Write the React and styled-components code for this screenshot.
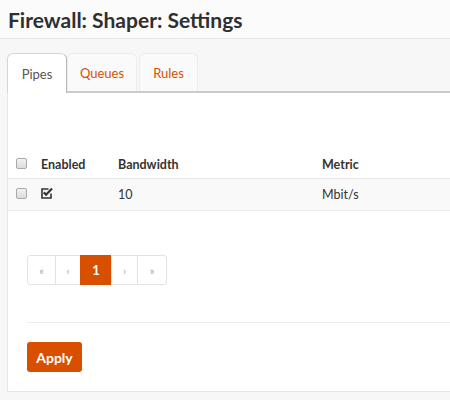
import React from 'react';
import styled, { createGlobalStyle } from 'styled-components';

const GlobalStyle = createGlobalStyle`
  body {
    margin: 0;
    background: #f7f7f7;
    font-family: Lato, "Liberation Sans", sans-serif;
    color: #333;
    overflow: hidden;
  }
`;

const ORANGE = '#d94f00';

const Header = styled.header`
  height: 38px;
  background: #fbfbfb;
  border-bottom: 1px solid #e6e6e6;
  display: flex;
  align-items: center;
  padding-left: 8px;
`;

const Title = styled.h1`
  margin: 0;
  font-size: 21px;
  font-weight: 700;
  color: #2f2f2f;
`;

const Main = styled.main`
  padding: 14px 0 0 7px;
`;

const TabBar = styled.ul`
  list-style: none;
  margin: 0;
  padding: 0;
  display: flex;
  height: 38px;
  border-bottom: 2px solid #cbcbcb;
`;

const Tab = styled.li`
  display: flex;
  align-items: center;
  justify-content: center;
  width: ${(p) => p.w}px;
  box-sizing: border-box;
  font-size: 13px;
  border-radius: 6px 6px 0 0;
  color: ${(p) => (p.active ? '#555' : ORANGE)};
  background: ${(p) => (p.active ? '#fff' : '#fafafa')};
  border: 1px solid ${(p) => (p.active ? '#d6d6d6' : '#ececec')};
  border-right-color: ${(p) => (p.active ? '#b8b8b8' : '#ececec')};
  border-bottom: none;
  margin-bottom: ${(p) => (p.active ? '-2px' : '0')};
  margin-right: ${(p) => (p.active ? '0' : '2px')};
`;

const Panel = styled.section`
  background: #fff;
  border: 1px solid #e6e6e6;
  border-top: none;
  border-right: none;
  padding-top: 57px;
`;

const Row = styled.div`
  display: grid;
  grid-template-columns: 33px 77px 204px 1fr;
  align-items: center;
  height: ${(p) => (p.head ? '28px' : '31px')};
  background: ${(p) => (p.head ? '#fff' : '#f9f9f9')};
  border-bottom: 1px solid ${(p) => (p.head ? '#e8e8e8' : '#ececec')};
  font-size: 12.5px;
  font-weight: ${(p) => (p.head ? 700 : 400)};
  color: #333;
`;

const Box = styled.span`
  display: block;
  width: 11px;
  height: 11px;
  margin-left: 8px;
  margin-top: -2px;
  border: 1px solid #a9a9a9;
  border-radius: 2px;
  background: linear-gradient(#f2f2f2, #dcdcdc);
  box-sizing: border-box;
`;

const Footer = styled.div`
  padding: 44px 0 19px 19px;
`;

const Pager = styled.div`
  display: flex;
`;

const PageBtn = styled.span`
  display: flex;
  align-items: center;
  justify-content: center;
  width: ${(p) => p.w}px;
  height: 30px;
  box-sizing: border-box;
  border: 1px solid ${(p) => (p.active ? ORANGE : '#e2e2e2')};
  margin-left: -1px;
  font-size: ${(p) => (p.active ? '13px' : '11px')};
  font-weight: ${(p) => (p.active ? 700 : 400)};
  color: ${(p) => (p.active ? '#fff' : '#aaa')};
  background: ${(p) => (p.active ? ORANGE : '#fff')};
  &:first-child {
    margin-left: 0;
    border-radius: 3px 0 0 3px;
  }
  &:last-child {
    border-radius: 0 3px 3px 0;
  }
`;

const Rule = styled.hr`
  border: none;
  border-top: 1px solid #ebebeb;
  margin: 37px 0 19px;
`;

const Apply = styled.button`
  width: 55px;
  height: 30px;
  border: none;
  border-radius: 3px;
  background: ${ORANGE};
  color: #fff;
  font-family: inherit;
  font-weight: 700;
  font-size: 14px;
  padding: 0;
`;

const CheckIcon = () => (
  <svg width="12" height="12" viewBox="0 0 12 12" style={{ display: 'block', marginTop: -3 }}>
    <path d="M10 6.5V11H1V2H7.5" fill="none" stroke="#333" strokeWidth="1.6" />
    <path d="M2.8 5.4L5.1 7.7L11 1.5" fill="none" stroke="#333" strokeWidth="2.2" />
  </svg>
);

const tabs = [
  { label: 'Pipes', w: 60, active: true },
  { label: 'Queues', w: 70 },
  { label: 'Rules', w: 59 },
];

const pages = [
  { label: '«', w: 29 },
  { label: '‹', w: 26 },
  { label: '1', w: 32, active: true },
  { label: '›', w: 27 },
  { label: '»', w: 30 },
];

export default function App() {
  return (
    <>
      <GlobalStyle />
      <Header>
        <Title>Firewall: Shaper: Settings</Title>
      </Header>
      <Main>
        <TabBar>
          {tabs.map((t) => (
            <Tab key={t.label} w={t.w} active={t.active}>{t.label}</Tab>
          ))}
        </TabBar>
        <Panel>
          <Row head>
            <Box />
            <span>Enabled</span>
            <span>Bandwidth</span>
            <span>Metric</span>
          </Row>
          <Row>
            <Box />
            <CheckIcon />
            <span>10</span>
            <span>Mbit/s</span>
          </Row>
          <Footer>
            <Pager>
              {pages.map((p) => (
                <PageBtn key={p.label} w={p.w} active={p.active}>{p.label}</PageBtn>
              ))}
            </Pager>
            <Rule />
            <Apply>Apply</Apply>
          </Footer>
        </Panel>
      </Main>
    </>
  );
}
